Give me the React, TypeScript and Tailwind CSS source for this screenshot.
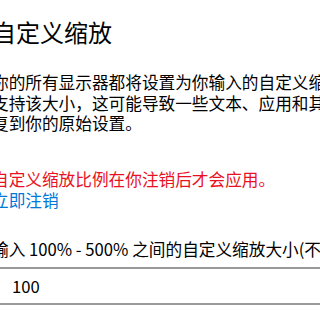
import React from "react";

export default function App() {
  const font = { fontFamily: '"Noto Sans CJK SC", "Noto Sans", sans-serif' };
  return (
    <div className="w-[320px] h-[320px] overflow-hidden bg-white text-black" style={font}>
      <div className="ml-[-8px] w-[500px]">
        <div className="pt-[16px] text-[24px] leading-[32px] whitespace-nowrap">自定义缩放</div>
        <div className="mt-[24px] text-[16.67px] leading-[20.5px] whitespace-nowrap">
          <div>你的所有显示器都将设置为你输入的自定义缩放大小。</div>
          <div>支持该大小，这可能导致一些文本、应用和其他项不可读。</div>
          <div>复到你的原始设置。</div>
        </div>
        <div className="mt-[35.5px] text-[16.67px] leading-[20px] whitespace-nowrap text-[#e81123]">
          自定义缩放比例在你注销后才会应用。
        </div>
        <div className="mt-[1px] text-[16.67px] leading-[20px] whitespace-nowrap text-[#0078d7]">
          立即注销
        </div>
        <div className="mt-[29px] text-[16.67px] leading-[20px] whitespace-nowrap">
          输入 100% - 500% 之间的自定义缩放大小(不能超过显示器支持的最大值)
        </div>
        <div className="mt-[8px] w-[480px] h-[38px] border-2 border-[#999999] flex items-center pl-[18px] text-[16.67px]">
          100
        </div>
      </div>
    </div>
  );
}
